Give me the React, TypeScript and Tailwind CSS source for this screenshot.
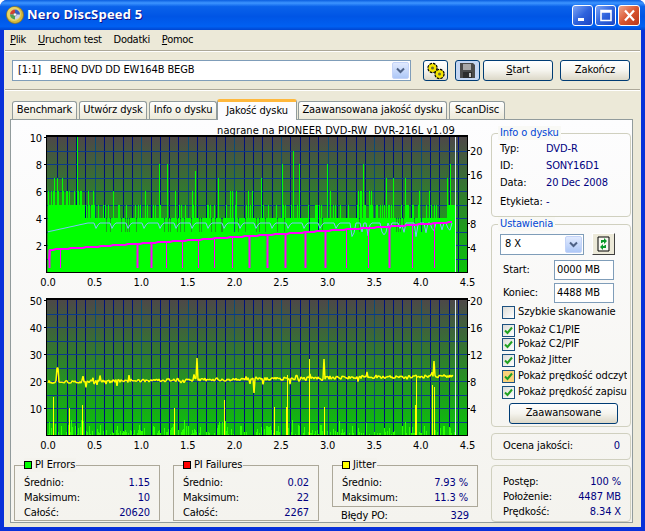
import type { ReactNode } from "react";

// seeded random so the charts stay the same on each render
function rng(seed: number) {
  let s = seed;
  return () => {
    s = (s + 0x6d2b79f5) | 0;
    let t = Math.imul(s ^ (s >>> 15), 1 | s);
    t = (t + Math.imul(t ^ (t >>> 7), 61 | t)) ^ t;
    return ((t ^ (t >>> 14)) >>> 0) / 4294967296;
  };
}

const X0 = 36; // plot left inside the svg
const W = 420;
const END = 408; // where the scan stops (x = 455 on screen)
const H = 135;

function Grid({ top }: { top: number }) {
  const v = [];
  for (let i = 1; i <= 45; i++) {
    const x = X0 + 1 + i * 9.32;
    v.push(<line key={i} x1={Math.round(x) + 0.5} x2={Math.round(x) + 0.5} y1={top} y2={top + H} stroke={i % 5 === 0 ? "#0a4a78" : "#00107a"} />);
  }
  const h = [];
  for (let i = 1; i < 10; i++) {
    const y = Math.round(top + i * 13.5) + 0.5;
    h.push(<line key={i} x1={X0} x2={X0 + W} y1={y} y2={y} stroke="#0a3a8a" />);
  }
  return (
    <>
      {v}
      {h}
    </>
  );
}

function Frame({ top, left, right, id }: { top: number; left: [string, number][]; right: [string, number][]; id: string }) {
  const xs = ["0.0", "0.5", "1.0", "1.5", "2.0", "2.5", "3.0", "3.5", "4.0", "4.5"];
  return (
    <>
      <rect x={X0 - 0.5} y={top - 0.5} width={W + 1} height={H + 1} fill="none" stroke="#000" />
      <line x1={X0 - 1} x2={X0 + W + 1} y1={top - 1} y2={top - 1} stroke="#000" strokeWidth={2} />
      {left.map(([t, y]) => (
        <g key={id + t}>
          <line x1={X0 - 3} x2={X0} y1={y + 0.5} y2={y + 0.5} stroke="#000" />
          <text x={X0 - 5} y={y + 4.5} textAnchor="end" fill="#000">{t}</text>
        </g>
      ))}
      {right.map(([t, y]) => (
        <g key={id + "r" + t}>
          <line x1={X0 + W} x2={X0 + W + 3} y1={y + 0.5} y2={y + 0.5} stroke="#000" />
          <text x={X0 + W + 3} y={y + 4.5} fill="#000">{t}</text>
        </g>
      ))}
      {xs.map((t, i) => (
        <text key={id + "x" + t} x={X0 + 1 + i * 46.6} y={top + H + 14} textAnchor="middle" fill="#000">{t}</text>
      ))}
    </>
  );
}

function TopChart() {
  const top = 15;
  const bottom = top + H;
  const u = 13.5;
  const r = rng(17);
  let d = "";
  const spikes: Record<number, number> = {
    4: 6, 7: 7, 10: 7, 15: 7, 20: 6, 30: 10, 33: 6, 41: 6, 46: 6, 66: 6, 72: 5, 98: 6, 112: 8, 120: 8, 128: 6, 148: 7.5, 171: 7, 185: 6, 205: 6, 214: 7, 235: 8, 246: 9, 252: 8, 280: 8, 316: 8, 322: 6, 339: 7, 346: 7, 358: 7, 372: 6, 382: 6, 400: 7, 403: 8,
  };
  for (let x = X0 + 1; x < X0 + END; x++) {
    const c = r();
    let v = c < 0.12 ? 3 : c < 0.78 ? 4 : c < 0.96 ? 5 : 6;
    const px = x - X0;
    if (px < 36) v = c < 0.6 ? 5 : 6;
    else if (px < 48) v = c < 0.2 ? 4 : 5;
    if (spikes[px]) v = spikes[px];
    if (px > 375) v = Math.max(v, 4);
    if (px > 400) v = Math.max(v, 5);
    d += `M${x + 0.5} ${bottom}V${bottom - v * u}`;
  }
  // pink write speed line, with drops down to the axis
  const pinkY = (px: number) => 128 - (px / 408) * 28;
  const drops = [2, 13, 90, 104, 119, 135, 151, 167, 185, 202, 220, 238, 258, 278, 299, 321, 342, 365, 387];
  let pink = `M${X0 + 2} ${pinkY(0) + 10}`;
  for (let px = 3; px < END - 2; px += 3) pink += `L${X0 + px} ${Math.round(pinkY(px))}`;
  const r2 = rng(5);
  let blue = "";
  for (let px = 1; px < END - 1; px += 2) {
    let y = px < 40 ? 110 - px * 0.22 : 101;
    const m = px % 16;
    if (px > 40 && m < 4) y = 101 + (4 - m) * 1.8;
    if (px > 300 && r2() < 0.25) y += 5 + r2() * 5;
    blue += `${blue ? "L" : "M"}${X0 + px} ${y.toFixed(1)}`;
  }
  const ly = (n: number) => top + H - n * 13.5;
  return (
    <svg width={479} height={168} className="block shrink-0">
      <defs>
        <linearGradient id="plotA" x1="0" y1="0" x2="0" y2="1">
          <stop offset="0" stopColor="#4d4848" />
          <stop offset="1" stopColor="#0ac40a" />
        </linearGradient>
      </defs>
      <text x={444} y={12} textAnchor="end" fill="#000" xmlSpace="preserve" className="tracking-[0.1px]">nagrane na PIONEER DVD-RW  DVR-216L v1.09</text>
      <rect x={X0} y={top} width={W} height={H} fill="url(#plotA)" />
      <Grid top={top} />
      <path d={d} stroke="#00ff00" shapeRendering="crispEdges" fill="none" />
      <path d={blue} stroke="#7fbfff" fill="none" />
      {drops.map((px) => (
        <line key={px} x1={X0 + px + 0.5} x2={X0 + px + 0.5} y1={pinkY(px)} y2={bottom - 4} stroke="#ff00ff" strokeWidth={px % 2 ? 1 : 2} />
      ))}
      <path d={pink} stroke="#ff00ff" strokeWidth={2} fill="none" />
      <line x1={X0 + END + 0.5} x2={X0 + END + 0.5} y1={top} y2={bottom} stroke="#d8e4f4" />
      <Frame
        id="a"
        top={top}
        left={[["10", ly(10)], ["8", ly(8)], ["6", ly(6)], ["4", ly(4)], ["2", ly(2)]]}
        right={[["20", 28], ["16", 52], ["12", 77], ["8", 101], ["4", 125]]}
      />
    </svg>
  );
}

function BottomChart() {
  const top = 10;
  const bottom = top + H;
  const r = rng(91);
  let d = "";
  for (let x = X0 + 1; x < X0 + END; x++) {
    const c = r();
    const h = c < 0.5 ? 0 : c < 0.75 ? 1 + r() * 3 : c < 0.95 ? 4 + r() * 6 : 10 + r() * 6;
    if (h) d += `M${x + 0.5} ${bottom}V${bottom - Math.round(h)}`;
  }
  const yellowBars: [number, number][] = [
    [6, 38], [22, 27], [35, 30], [127, 27], [177, 35], [227, 28], [239, 28], [262, 76], [240, 60], [277, 28], [368, 30], [369, 60], [385, 50], [387, 48],
  ];
  const r3 = rng(33);
  let jit = "";
  for (let px = 1; px < END - 1; px++) {
    let y = 92 - (px / END) * 6;
    const c = r3();
    y += (r3() - 0.5) * 3;
    if (c < 0.05) y -= r3() * 5;
    if (c > 0.95) y += r3() * 5;
    if (px === 10 || px === 11) y = 78;
    if (px === 150) y = 68;
    if (px === 277) y = 69;
    if (px === 387) y = 71;
    if (px === 207) y = 103;
    jit += `${jit ? "L" : "M"}${X0 + px} ${y.toFixed(1)}`;
  }
  const ly = (n: number) => top + H - n * 2.7;
  return (
    <svg width={479} height={172} className="block shrink-0">
      <defs>
        <linearGradient id="plotB" x1="0" y1="0" x2="0" y2="1">
          <stop offset="0" stopColor="#4d4848" />
          <stop offset="1" stopColor="#0ac40a" />
        </linearGradient>
      </defs>
      <rect x={X0} y={top} width={W} height={H} fill="url(#plotB)" />
      <Grid top={top} />
      <path d={d} stroke="#2cff00" shapeRendering="crispEdges" fill="none" />
      {yellowBars.map(([px, h]) => (
        <line key={px} x1={X0 + px + 0.5} x2={X0 + px + 0.5} y1={bottom - h} y2={bottom} stroke="#ffff00" />
      ))}
      <path d={jit} stroke="#ffff00" strokeWidth={1.5} fill="none" strokeLinejoin="bevel" />
      <line x1={X0 + END + 0.5} x2={X0 + END + 0.5} y1={top} y2={bottom} stroke="#d8e4f4" />
      <Frame
        id="b"
        top={top}
        left={[["50", ly(50)], ["40", ly(40)], ["30", ly(30)], ["20", ly(20)], ["10", ly(10)]]}
        right={[["20", 10], ["16", 37], ["12", 64], ["8", 91], ["4", 118]]}
      />
    </svg>
  );
}

function Chevron() {
  return (
    <svg width="9" height="7" viewBox="0 0 9 7">
      <path d="M1 1.500 4.500 5 8 1.500" fill="none" stroke="#4d6185" strokeWidth="2" />
    </svg>
  );
}

function ComboArrow() {
  return (
    <div className="w-[17px] h-[17px] rounded-[2px] bg-gradient-to-b from-[#e1eafe] to-[#aec8f7] border border-[#c3d3f8] flex items-center justify-center">
      <Chevron />
    </div>
  );
}

function XpButton({ className, children }: { className: string; children: ReactNode }) {
  return (
    <div className={"flex items-center justify-center rounded-[3px] border border-[#003c74] bg-gradient-to-b from-white via-[#f5f4ee] to-[#dcd8c8] text-black " + className}>
      {children}
    </div>
  );
}

function Group({ title, className, children }: { title: string; className: string; children: ReactNode }) {
  return (
    <div className={"relative rounded-[4px] border border-[#d0d0bf] " + className}>
      {title && <span className="absolute -top-[8px] left-[6px] px-[2px] bg-[#f9f9f5] text-[#0046d5] leading-[14px]">{title}</span>}
      {children}
    </div>
  );
}

function Legend({ color, title, className, children }: { color: string; title: string; className: string; children: ReactNode }) {
  return (
    <div className={"relative border border-[#aca899] w-[146px] " + className}>
      <div className="absolute -top-[8px] left-[9px] flex items-center gap-[3px] pr-[1px] bg-[#f4f3ee] leading-[14px]">
        <span className="w-[6px] h-[6px] border border-black box-content" style={{ background: color }} />
        <span>{title}</span>
      </div>
      {children}
    </div>
  );
}

function Row({ label, value }: { label: string; value: string }) {
  return (
    <div className="h-[15px] flex justify-between items-center leading-[15px]">
      <span>{label}</span>
      <span className="text-[#000080]">{value}</span>
    </div>
  );
}

function Check({ label, checked, hot, className }: { label: string; checked?: boolean; hot?: boolean; className: string }) {
  return (
    <div className={"h-[14px] flex items-center w-[125px] ml-[10px] " + className}>
      <span className={"w-[13px] h-[13px] shrink-0 mr-[3px] border border-[#1c5180] flex items-center justify-center " + (hot ? "bg-[#fbd27a]" : "bg-gradient-to-br from-[#dcdcd7] to-white")}>
        {checked && (
          <svg width="9" height="9" viewBox="0 0 9 9">
            <path d="M1 4.500 3.500 7 8 1.500" fill="none" stroke="#21a121" strokeWidth="2" />
          </svg>
        )}
      </span>
      <span className="whitespace-nowrap overflow-hidden">{label}</span>
    </div>
  );
}

function Tab({ w, label, active }: { w: string; label: string; active?: boolean }) {
  if (active) {
    return (
      <div className={"relative z-10 h-[21px] -mb-px rounded-t-[3px] border-x border-[#919b9c] border-t-[3px] border-t-[#ffb83c] bg-[#fcfcfe] flex items-center justify-center " + w}>
        {label}
      </div>
    );
  }
  return (
    <div className={"h-[18px] rounded-t-[3px] border-x border-t border-[#919b9c] bg-gradient-to-b from-white to-[#ece9d8] flex items-center justify-center " + w}>
      {label}
    </div>
  );
}

function WinBtn({ className, children }: { className: string; children: ReactNode }) {
  return (
    <div className={"w-[21px] h-[21px] rounded-[3px] border border-white flex items-center justify-center " + className}>
      <svg width="15" height="15" viewBox="0 0 15 15">{children}</svg>
    </div>
  );
}

function Gear({ cx, cy }: { cx: number; cy: number }) {
  return (
    <>
      <circle cx={cx} cy={cy} r="4.600" fill="#f4e400" stroke="#000" strokeWidth="1.200" strokeDasharray="2.600 1" />
      <circle cx={cx} cy={cy} r="1.500" fill="#6a6a30" />
    </>
  );
}

export default function App() {
  return (
    <div className="w-[645px] h-[531px] overflow-hidden flex flex-col rounded-t-[7px] bg-[#0831d9] text-[11px] tracking-[-0.12px] text-black font-['DejaVu_Sans_Condensed','DejaVu_Sans',sans-serif]">
      {/* Title bar */}
      <div className="h-[30px] shrink-0 flex items-center pl-[6px] pr-[4px] bg-[linear-gradient(180deg,#0a5ee0_0%,#3d95ff_10%,#0a62ea_22%,#0055e5_55%,#0060f2_88%,#0045d0_100%)]">
        <svg width="18" height="18" viewBox="0 0 18 18" className="mr-[2px]">
          <circle cx="9" cy="9" r="8.500" fill="#d4b83c" stroke="#8a7420" strokeWidth=".8" />
          <circle cx="8" cy="8" r="7" fill="#e8d468" />
          <circle cx="9" cy="8.500" r="5" fill="#c9d4ec" />
          <path d="M9 3.500a5 5 0 0 1 5 5H9z" fill="#3a5fc0" />
          <path d="M4 8.500a5 5 0 0 1 5-5v5z" fill="#d04030" />
          <path d="M4 8.500a5 5 0 0 0 5 5v-5z" fill="#50a050" />
          <circle cx="9" cy="8.500" r="1.600" fill="#fff" stroke="#666" strokeWidth=".5" />
        </svg>
        <span className="ml-[1px] text-white font-bold text-[13px] font-['Open_Sans',sans-serif] tracking-[0.2px] [text-shadow:1px_1px_#0f1089]">Nero DiscSpeed 5</span>
        <div className="ml-auto flex items-center gap-[2px] mr-[1px]">
          <WinBtn className="bg-gradient-to-br from-[#7fa4f4] via-[#2f63dd] to-[#1c45c4]">
            <rect x="3" y="10" width="6" height="3" fill="#fff" />
          </WinBtn>
          <WinBtn className="bg-gradient-to-br from-[#7fa4f4] via-[#2f63dd] to-[#1c45c4]">
            <path d="M3 2.500h10v10H3z M3 4h10" fill="none" stroke="#fff" strokeWidth="1.600" />
          </WinBtn>
          <WinBtn className="bg-gradient-to-br from-[#eea58a] via-[#d9552f] to-[#b9361a] w-[22px]">
            <path d="M3 2.500 12 12.500M12 2.500 3 12.500" stroke="#fff" strokeWidth="2.200" />
          </WinBtn>
        </div>
      </div>

      {/* Window body */}
      <div className="flex-1 mx-[4px] mb-[4px] flex flex-col bg-[#ece9d8] min-h-0">
        <div className="h-[20px] flex items-center gap-[12px] pl-[6px] shrink-0 tracking-[-0.3px]">
          <span><u>P</u>lik</span>
          <span><u>U</u>ruchom test</span>
          <span>Dodatki</span>
          <span><u>P</u>omoc</span>
        </div>
        <div className="mx-[1px] h-[2px] shrink-0 border-t border-b border-t-[#aca899] border-b-white" />

        <div className="h-[37px] shrink-0 flex items-center pl-[8px]">
          <div className="w-[399px] h-[21px] border border-[#7f9db9] bg-white flex items-center justify-between pl-[5px] pr-px whitespace-pre">
            <span>[1:1]   BENQ DVD DD EW164B BEGB</span>
            <ComboArrow />
          </div>
          <XpButton className="ml-[12px] w-[25px] h-[21px]">
            <svg width="20" height="18" viewBox="0 0 20 18">
              <Gear cx={6.500} cy={6} />
              <Gear cx={13.500} cy={12} />
            </svg>
          </XpButton>
          <div className="ml-[7px] w-[25px] h-[21px] rounded-[3px] border border-[#003c74] bg-[#c4d6f2] p-[2px] flex items-center justify-center">
            <svg width="15" height="15" viewBox="0 0 15 15">
              <path d="M0 0h13l2 2v13H0z" fill="#4a4a4a" />
              <rect x="3" y="1" width="8" height="6" fill="#a8a8a8" />
              <rect x="3" y="9" width="9" height="6" fill="#2c2c2c" />
              <rect x="9" y="10" width="2" height="4" fill="#c0c0c0" />
            </svg>
          </div>
          <XpButton className="ml-[3px] w-[70px] h-[21px]"><span><u>S</u>tart</span></XpButton>
          <XpButton className="ml-[7px] w-[70px] h-[21px]">Zakończ</XpButton>
        </div>
        <div className="mx-[1px] h-[2px] shrink-0 border-t border-b border-t-[#aca899] border-b-white" />

        {/* Tabs */}
        <div className="h-[28px] shrink-0 flex items-end pl-[8px] gap-[2px]">
          <Tab w="w-[65px]" label="Benchmark" />
          <Tab w="w-[68px]" label="Utwórz dysk" />
          <Tab w="w-[68px] -mr-[2px]" label="Info o dysku" />
          <Tab w="w-[80px]" label="Jakość dysku" active />
          <Tab w="w-[149px] -ml-px" label="Zaawansowana jakość dysku" />
          <Tab w="w-[56px]" label="ScanDisc" />
        </div>

        {/* Tab panel */}
        <div className="ml-[6px] mr-[8px] h-[404px] shrink-0 border border-[#919b9c] bg-gradient-to-b from-[#fdfdfe] to-[#f4f3ee] flex">
          <div className="w-[480px] shrink-0 pt-[2px]">
            <TopChart />
            <BottomChart />
            <div className="mt-[3px] pl-[3px] flex gap-[13px]">
              <Legend color="#00ff00" title="PI Errors" className="h-[56px] pt-[9px] px-[9px]">
                <Row label="Średnio:" value="1.15" />
                <Row label="Maksimum:" value="10" />
                <Row label="Całość:" value="20620" />
              </Legend>
              <Legend color="#ff0000" title="PI Failures" className="h-[56px] pt-[9px] px-[9px]">
                <Row label="Średnio:" value="0.02" />
                <Row label="Maksimum:" value="22" />
                <Row label="Całość:" value="2267" />
              </Legend>
              <div className="w-[146px]">
                <Legend color="#ffff00" title="Jitter" className="h-[42px] pt-[9px] px-[9px]">
                  <Row label="Średnio:" value="7.93 %" />
                  <Row label="Maksimum:" value="11.3 %" />
                </Legend>
                <div className="mt-[1px] px-[9px]">
                  <Row label="Błędy PO:" value="329" />
                </div>
              </div>
            </div>
          </div>

          <div className="w-[140px] shrink-0 pt-[13px] flex flex-col">
            <Group title="Info o dysku" className="h-[84px] pt-[7px] pl-[8px]">
              <div className="h-[17px] flex items-center"><span className="w-[46px]">Typ:</span><span className="text-[#000080]">DVD-R</span></div>
              <div className="h-[17px] flex items-center"><span className="w-[46px]">ID:</span><span className="text-[#000080]">SONY16D1</span></div>
              <div className="h-[17px] flex items-center"><span className="w-[46px]">Data:</span><span className="text-[#000080]">20 Dec 2008</span></div>
              <div className="h-[17px] mt-[2px] flex items-center"><span className="w-[46px]">Etykieta:</span><span className="text-[#000080]">-</span></div>
            </Group>

            <Group title="Ustawienia" className="mt-[7px] h-[203px] pt-[8px]">
              <div className="flex items-center pl-[8px]">
                <div className="w-[84px] h-[21px] border border-[#7f9db9] bg-white flex items-center justify-between pl-[4px] pr-px">
                  <span>8 X</span>
                  <ComboArrow />
                </div>
                <div className="ml-[8px] w-[23px] h-[22px] bg-[#ece9d8] border border-t-white border-l-white border-r-[#404040] border-b-[#404040] flex items-center justify-center">
                  <svg width="13" height="16" viewBox="0 0 13 16">
                    <path d="M1 1h11v14H1z" fill="#f8f8f0" stroke="#000" />
                    <path d="M4 7V4h3V2l3 3-3 3V6H5.500v1zM9 9v3H6v2L3 11l3-3v2h1.500V9z" fill="#0a9a2a" />
                  </svg>
                </div>
              </div>
              <div className="mt-[5px] flex items-center pl-[11px]">
                <span className="w-[51px]">Start:</span>
                <div className="w-[60px] h-[20px] border border-[#7f9db9] bg-white flex items-center pl-[2px]">0000 MB</div>
              </div>
              <div className="mt-[3px] flex items-center pl-[11px]">
                <span className="w-[51px]">Koniec:</span>
                <div className="w-[60px] h-[20px] border border-[#7f9db9] bg-white flex items-center pl-[2px]">4488 MB</div>
              </div>
              <Check className="mt-[2px]" label="Szybkie skanowanie" />
              <Check className="mt-[4px]" label="Pokaż C1/PIE" checked />
              <Check className="mt-[0px]" label="Pokaż C2/PIF" checked />
              <Check className="mt-[2px]" label="Pokaż Jitter" checked />
              <Check className="mt-[2px]" label="Pokaż prędkość odczytu" checked hot />
              <Check className="mt-[2px]" label="Pokaż prędkość zapisu" checked />
              <XpButton className="mt-[4px] ml-[17px] w-[109px] h-[21px]">Zaawansowane</XpButton>
            </Group>

            <Group title="" className="mt-[6px] h-[27px] flex items-center justify-between pl-[11px] pr-[10px]">
              <span>Ocena jakości:</span>
              <span className="text-[#000080]">0</span>
            </Group>

            <Group title="" className="mt-[5px] h-[57px] pt-[8px] pl-[11px] pr-[9px]">
              <Row label="Postęp:" value="100 %" />
              <Row label="Położenie:" value="4487 MB" />
              <Row label="Prędkość:" value="8.34 X" />
            </Group>
          </div>
        </div>
      </div>
    </div>
  );
}
